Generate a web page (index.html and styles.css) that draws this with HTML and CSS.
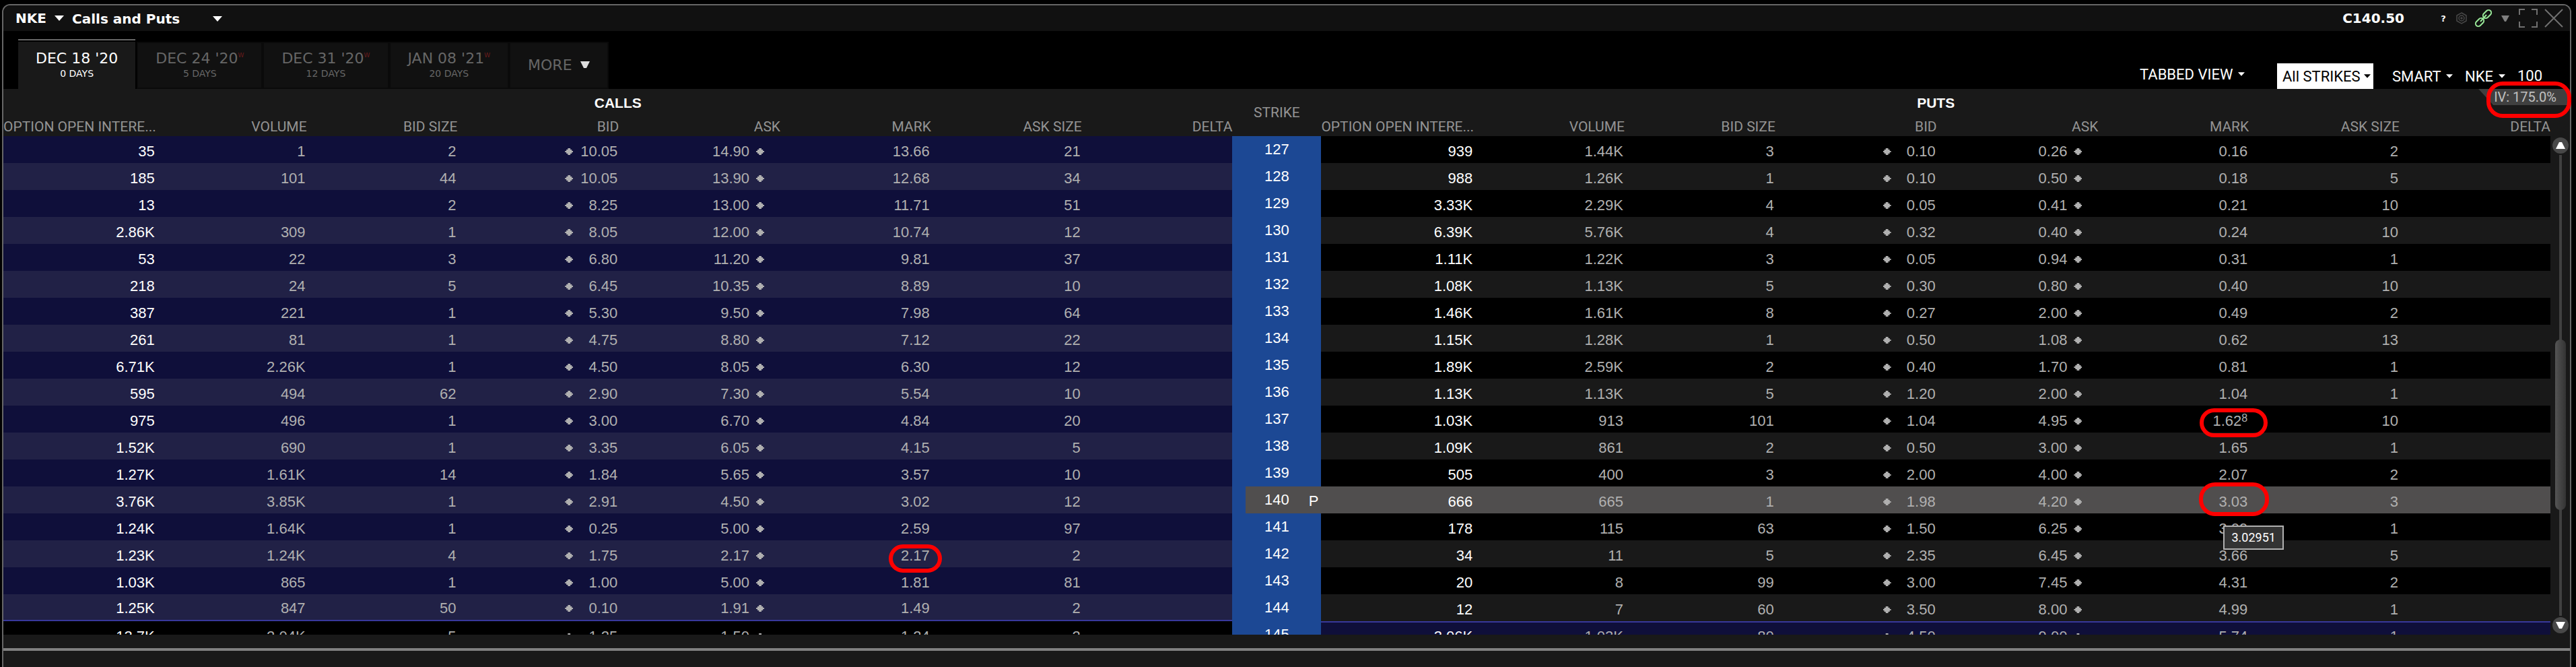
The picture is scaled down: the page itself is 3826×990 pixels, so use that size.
FILE: index.html
```html
<!DOCTYPE html>
<html lang="en">
<head>
  <meta charset="UTF-8" />
  <meta name="viewport" content="width=device-width, initial-scale=1.0"/>
  <title>NKE Calls and Puts</title>
  <link rel="stylesheet" href="styles.css">
</head>
<body>
  <div class="panel">
    <header class="titlebar">
      <label class="pick symbol">
        <select aria-label="Symbol"><option>NKE</option></select>
        <svg class="caret" viewBox="0 0 14 8"><path d="M0 0h14L7 8z"/></svg>
      </label>
      <label class="pick layout">
        <select aria-label="Layout"><option>Calls and Puts</option></select>
        <svg class="caret" viewBox="0 0 14 8"><path d="M0 0h14L7 8z"/></svg>
      </label>
      <strong class="last">C140.50</strong>
      <div class="tools">
        <button class="help" aria-label="Help">?</button>
        <button aria-label="Settings">
          <svg width="18" height="18" viewBox="0 0 18 18" fill="none" stroke="#484848" stroke-width="1.5"><path d="M9 1l7 4v8l-7 4-7-4V5z"/><circle cx="9" cy="9" r="4"/><circle cx="9" cy="9" r="1"/></svg>
        </button>
        <button class="link" aria-label="Link group">
          <svg width="28" height="28" viewBox="0 0 28 28" fill="none" stroke="#98e898" stroke-width="2"><rect x="-7" y="-4" width="14" height="8" rx="4" transform="translate(19 8) rotate(-45)"/><rect x="-7" y="-4" width="14" height="8" rx="4" transform="translate(8 20) rotate(-45)"/><path d="M9 19l9-10"/></svg>
        </button>
        <button class="group" aria-label="Link group menu">
          <svg width="12" height="9" viewBox="0 0 12 9" fill="#808080"><path d="M0 0h12L7 9H5z"/></svg>
        </button>
        <button class="full" aria-label="Full screen">
          <svg width="28" height="28" viewBox="0 0 28 28" fill="none" stroke="#707070" stroke-width="2"><path d="M1 9V1h8M19 1h8v8M27 19v8h-8M9 27H1v-8"/></svg>
        </button>
        <button aria-label="Close">
          <svg width="28" height="28" viewBox="0 0 28 28" fill="none" stroke="#707070" stroke-width="2"><path d="M1 1l26 26M27 1L1 27"/></svg>
        </button>
      </div>
    </header>

    <nav class="tabbar">
      <button class="tab active"><span>DEC 18 '20</span><small>0 DAYS</small></button>
      <button class="tab"><span>DEC 24 '20<sup>W</sup></span><small>5 DAYS</small></button>
      <button class="tab"><span>DEC 31 '20<sup>W</sup></span><small>12 DAYS</small></button>
      <button class="tab"><span>JAN 08 '21<sup>W</sup></span><small>20 DAYS</small></button>
      <button class="tab more">MORE <svg width="14" height="10" viewBox="0 0 14 10" fill="#ddd"><path d="M0 0h14L9 10H5z"/></svg></button>

      <div class="filters">
        <label class="pick view">
          <select aria-label="View"><option>TABBED VIEW</option></select>
          <svg class="caret" viewBox="0 0 14 8"><path d="M0 0h14L7 8z"/></svg>
        </label>
        <label class="pick strikes">
          <select aria-label="Strikes"><option>All STRIKES</option></select>
          <svg class="caret" viewBox="0 0 14 8"><path d="M0 0h14L7 8z"/></svg>
        </label>
        <label class="pick route">
          <select aria-label="Exchange"><option>SMART</option></select>
          <svg class="caret" viewBox="0 0 14 8"><path d="M0 0h14L7 8z"/></svg>
        </label>
        <label class="pick">
          <select aria-label="Trading class"><option>NKE</option></select>
          <svg class="caret" viewBox="0 0 14 8"><path d="M0 0h14L7 8z"/></svg>
        </label>
        <input class="multiplier" type="text" aria-label="Multiplier" value="100">
      </div>
    </nav>

    <main class="chain">
      <table>
        <colgroup>
          <col><col><col><col class="wide"><col class="wide"><col><col><col>
          <col class="mid">
          <col><col><col><col class="wide"><col class="wide"><col><col><col>
        </colgroup>
        <thead>
          <tr class="sides">
            <th colspan="8">CALLS</th>
            <th rowspan="2" class="strike-head">STRIKE</th>
            <th colspan="8">PUTS</th>
          </tr>
          <tr class="heads">
            <th>OPTION OPEN INTERE...</th><th>VOLUME</th><th>BID SIZE</th><th>BID</th><th>ASK</th><th>MARK</th><th>ASK SIZE</th><th>DELTA</th>
            <th>OPTION OPEN INTERE...</th><th>VOLUME</th><th>BID SIZE</th><th>BID</th><th>ASK</th><th>MARK</th><th>ASK SIZE</th><th>DELTA</th>
          </tr>
        </thead>
        <tbody id="rows"></tbody>
      </table>

      <div class="scrollbar">
        <button aria-label="Scroll up"><svg width="14" height="10" viewBox="0 0 14 10" fill="#fff"><path d="M5 0h4l5 10H0z"/></svg></button>
        <div class="track"><div class="thumb"></div></div>
        <button aria-label="Scroll down"><svg width="14" height="10" viewBox="0 0 14 10" fill="#fff"><path d="M0 0h14L9 10H5z"/></svg></button>
      </div>

      <div class="iv">IV: 175.0%</div>
      <div class="ring ring-iv"></div>
    </main>

    <footer></footer>
  </div>

  <script>
    // strike | calls | puts : open interest, volume, bid size, bid, ask, mark, ask size
    const data = `
127|35,1,2,10.05,14.90,13.66,21|939,1.44K,3,0.10,0.26,0.16,2
128|185,101,44,10.05,13.90,12.68,34|988,1.26K,1,0.10,0.50,0.18,5
129|13,,2,8.25,13.00,11.71,51|3.33K,2.29K,4,0.05,0.41,0.21,10
130|2.86K,309,1,8.05,12.00,10.74,12|6.39K,5.76K,4,0.32,0.40,0.24,10
131|53,22,3,6.80,11.20,9.81,37|1.11K,1.22K,3,0.05,0.94,0.31,1
132|218,24,5,6.45,10.35,8.89,10|1.08K,1.13K,5,0.30,0.80,0.40,10
133|387,221,1,5.30,9.50,7.98,64|1.46K,1.61K,8,0.27,2.00,0.49,2
134|261,81,1,4.75,8.80,7.12,22|1.15K,1.28K,1,0.50,1.08,0.62,13
135|6.71K,2.26K,1,4.50,8.05,6.30,12|1.89K,2.59K,2,0.40,1.70,0.81,1
136|595,494,62,2.90,7.30,5.54,10|1.13K,1.13K,5,1.20,2.00,1.04,1
137|975,496,1,3.00,6.70,4.84,20|1.03K,913,101,1.04,4.95,1.62,10
138|1.52K,690,1,3.35,6.05,4.15,5|1.09K,861,2,0.50,3.00,1.65,1
139|1.27K,1.61K,14,1.84,5.65,3.57,10|505,400,3,2.00,4.00,2.07,2
140|3.76K,3.85K,1,2.91,4.50,3.02,12|666,665,1,1.98,4.20,3.03,3
141|1.24K,1.64K,1,0.25,5.00,2.59,97|178,115,63,1.50,6.25,3.09,1
142|1.23K,1.24K,4,1.75,2.17,2.17,2|34,11,5,2.35,6.45,3.66,5
143|1.03K,865,1,1.00,5.00,1.81,81|20,8,99,3.00,7.45,4.31,2
144|1.25K,847,50,0.10,1.91,1.49,2|12,7,60,3.50,8.00,4.99,1
145|13.7K,2.04K,5,1.25,1.50,1.24,2|3.06K,1.03K,80,4.50,9.00,5.74,1`;

    // extra markup that goes with single mark prices
    const marks = {
      "put137": '<sup>8</sup><i class="ring ring-137"></i>',
      "put140": '<i class="ring ring-140"></i><span class="tip">3.02951</span>',
      "call142": '<i class="ring ring-142"></i>'
    };

    function side(kind, strike, list) {
      const v = list.split(",");
      const extra = marks[kind + strike] || "";
      return `<td class="${kind} oi">${v[0]}</td><td class="${kind}">${v[1]}</td><td class="${kind}">${v[2]}</td>` +
        `<td class="${kind}"><i class="dot"></i><span class="bid">${v[3]}</span></td>` +
        `<td class="${kind} ask">${v[4]}<i class="dot"></i></td>` +
        `<td class="${kind}">${v[5]}${extra}</td><td class="${kind}">${v[6]}</td><td class="${kind}"></td>`;
    }

    document.getElementById("rows").innerHTML = data.trim().split("\n").map(line => {
      const [strike, calls, puts] = line.split("|");
      const flag = strike === "140" ? '<span class="flag">P</span>' : "";
      return `<tr class="k${strike}">${side("call", strike, calls)}<td class="strike">${strike}${flag}</td>${side("put", strike, puts)}</tr>`;
    }).join("");
  </script>
</body>
</html>
```
FILE: styles.css
```css
* {
  box-sizing: border-box;
}

body {
  margin: 0;
  height: 100vh;
  padding: 6px 7px 0 3px;
  background: #000;
  color: #fff;
  font-family: Roboto, sans-serif;
  font-size: 22px;
  overflow: hidden;
}

button, select, input {
  margin: 0;
  padding: 0;
  border: none;
  background: none;
  color: inherit;
  font: inherit;
  appearance: none;
}

svg {
  display: block;
}

.panel {
  display: flex;
  flex-direction: column;
  height: 100%;
  border: 2px solid #666;
  border-bottom: none;
  border-radius: 12px 12px 0 0;
}

/* Title bar */
.titlebar {
  display: flex;
  align-items: center;
  height: 38px;
  padding: 0 10px 0 18px;
  background: #111;
  border-radius: 10px 10px 0 0;
  font: bold 20px "DejaVu Sans", sans-serif;
}

.pick {
  display: flex;
  align-items: center;
  gap: 7px;
}

.caret {
  width: 10px;
  height: 6px;
  fill: currentColor;
}

.titlebar .pick {
  gap: 12px;
}

.titlebar .caret {
  width: 14px;
  height: 8px;
}

.layout {
  padding: 2px 0 0 12px;
}

.titlebar .layout {
  gap: 48px;
}

.last {
  margin-left: auto;
}

.tools {
  display: flex;
  align-items: center;
  gap: 10px;
  margin-left: 50px;
}

.help {
  width: 16px;
  font-size: 13px;
}

.group {
  margin-left: 2px;
}

.full {
  margin-left: 4px;
}

/* Expiry tabs */
.tabbar {
  display: flex;
  align-items: flex-end;
  gap: 4px;
  height: 86px;
  padding-left: 22px;
  background: #000;
  font: 22px "DejaVu Sans", sans-serif;
}

.tab {
  padding: 10px 26px 12px;
  margin-bottom: 2px;
  background: #111;
  color: #666;
  box-shadow: 0 0 0 2px #0a0a0a;
}

.tab span, .tab small {
  display: block;
  line-height: 26px;
}

.tab small {
  font-size: 14px;
  line-height: 18px;
}

.tab sup {
  color: #6a1c1c;
  font-size: 9px;
  line-height: 0;
  vertical-align: 9px;
}

.tab.active {
  padding: 14px 26px;
  margin-bottom: 0;
  border-top: 2px solid #666;
  background: #191919;
  color: #fff;
  box-shadow: inset 0 2px #000;
}

.tab.more {
  display: flex;
  align-items: center;
  gap: 12px;
  height: 66px;
}

.filters {
  display: flex;
  align-items: flex-end;
  margin-left: auto;
  padding-right: 24px;
  font: 22px Roboto, sans-serif;
}

.filters .pick {
  height: 38px;
  margin-right: 18px;
}

.filters .view {
  height: 44px;
  margin-right: 48px;
}

.filters .strikes {
  gap: 5px;
  padding: 0 4px 0 8px;
  margin-right: 28px;
  background: #fff;
  color: #000;
}

.multiplier {
  width: 54px;
  height: 40px;
}

/* Option chain */
.chain {
  position: relative;
  display: flex;
  flex: 1;
  min-height: 0;
  background: #191919;
}

table {
  flex: 1;
  height: 0;
  border-collapse: separate;
  border-spacing: 0;
  table-layout: fixed;
  font-family: "Liberation Sans", Arial, sans-serif;
  text-align: right;
}

col {
  width: 5.926%;
}

.wide {
  width: 6.349%;
}

.mid {
  width: 3.492%;
}

th {
  padding: 0;
  color: #939393;
  font: 21px/28px Roboto, sans-serif;
  text-align: center;
  white-space: nowrap;
}

.heads th {
  text-align: right;
}

.sides th {
  height: 42px;
  color: #fff;
  font: bold 21px/42px "Liberation Sans", Arial, sans-serif;
}

.sides .strike-head {
  color: #939393;
  font: 21px/28px Roboto, sans-serif;
}

td {
  position: relative;
  height: 40px;
  padding: 6px 2px 0 0;
  color: #b0b0b0;
  line-height: 34px;
  white-space: nowrap;
}

.call {
  background: #0f0f3a;
}

.put {
  background: #000;
}

tr:nth-child(even) .call {
  background: #212146;
}

tr:nth-child(even) .put {
  background: #191919;
}

.oi, td.strike {
  color: #fff;
}

td.strike {
  padding: 0;
  background: #1c4894;
  line-height: 40px;
  text-align: center;
}

.bid {
  display: inline-block;
  width: 66px;
}

.dot {
  display: inline-block;
  width: 12px;
  height: 10px;
  background: #b0b0b0;
  clip-path: polygon(34% 0, 66% 0, 66% 20%, 84% 20%, 84% 40%, 100% 40%, 100% 60%, 84% 60%, 84% 80%, 66% 80%, 66% 100%, 34% 100%, 34% 80%, 16% 80%, 16% 60%, 0 60%, 0 40%, 16% 40%, 16% 20%, 34% 20%);
  vertical-align: 2px;
}

.ask .dot {
  margin: 0 22px 0 10px;
}

td sup {
  font-size: 16px;
  line-height: 0;
  vertical-align: 6px;
}

/* Hovered strike */
tr.k140 .put {
  background: #504e4e;
}

.k140 td.strike {
  background: linear-gradient(to right, #1c4894 20px, #504e4e 20px);
}

.flag {
  position: absolute;
  top: 4px;
  right: 4px;
  line-height: 36px;
}

/* In the money boundary */
.k144 .call {
  padding-top: 4px;
  border-bottom: 2px solid #38389a;
}

tr.k145 .call {
  background: #000;
}

tr.k145 .put {
  padding-top: 4px;
  border-top: 2px solid #38389a;
  background: #0f0f3a;
}

.ring {
  position: absolute;
  z-index: 1;
  border: 6px solid #f00;
  border-radius: 24px;
}

.ring-137 {
  top: 4px;
  right: -28px;
  width: 101px;
  height: 43px;
}

.ring-140 {
  top: -6px;
  right: -30px;
  width: 104px;
  height: 50px;
}

.ring-142 {
  top: 6px;
  right: -16px;
  width: 79px;
  height: 42px;
}

.ring-iv {
  top: -11px;
  right: -2px;
  width: 126px;
  height: 54px;
}

.tip {
  position: absolute;
  z-index: 2;
  top: 58px;
  right: -52px;
  width: 90px;
  border: 2px solid #b0b0b0;
  background: #333;
  color: #fff;
  font: 18px/32px Roboto, sans-serif;
  text-align: center;
}

.iv {
  position: absolute;
  top: 0;
  right: 4px;
  padding: 0 16px 0 23px;
  background: #404040;
  clip-path: polygon(0 0, 100% 0, 100% 100%, 22px 100%);
  color: #c0c0c0;
  font-size: 20px;
  line-height: 24px;
}

.scrollbar {
  display: flex;
  flex-direction: column;
  align-items: center;
  gap: 2px;
  width: 29px;
  margin-top: 70px;
  padding: 2px 0;
}

.scrollbar button {
  display: flex;
  align-items: center;
  justify-content: center;
  width: 24px;
  height: 24px;
  border-radius: 50%;
  background: #484848;
}

.track {
  position: relative;
  flex: 1;
  width: 4px;
  background: #404040;
}

.thumb {
  position: absolute;
  top: 40%;
  left: -6px;
  width: 16px;
  height: 37%;
  border-radius: 8px;
  background: linear-gradient(to right, #555, #333);
}

footer {
  position: relative;
  z-index: 3;
  height: 48px;
  border-top: 20px solid #191919;
  background: linear-gradient(#808080 4px, #191919 4px);
}
```
